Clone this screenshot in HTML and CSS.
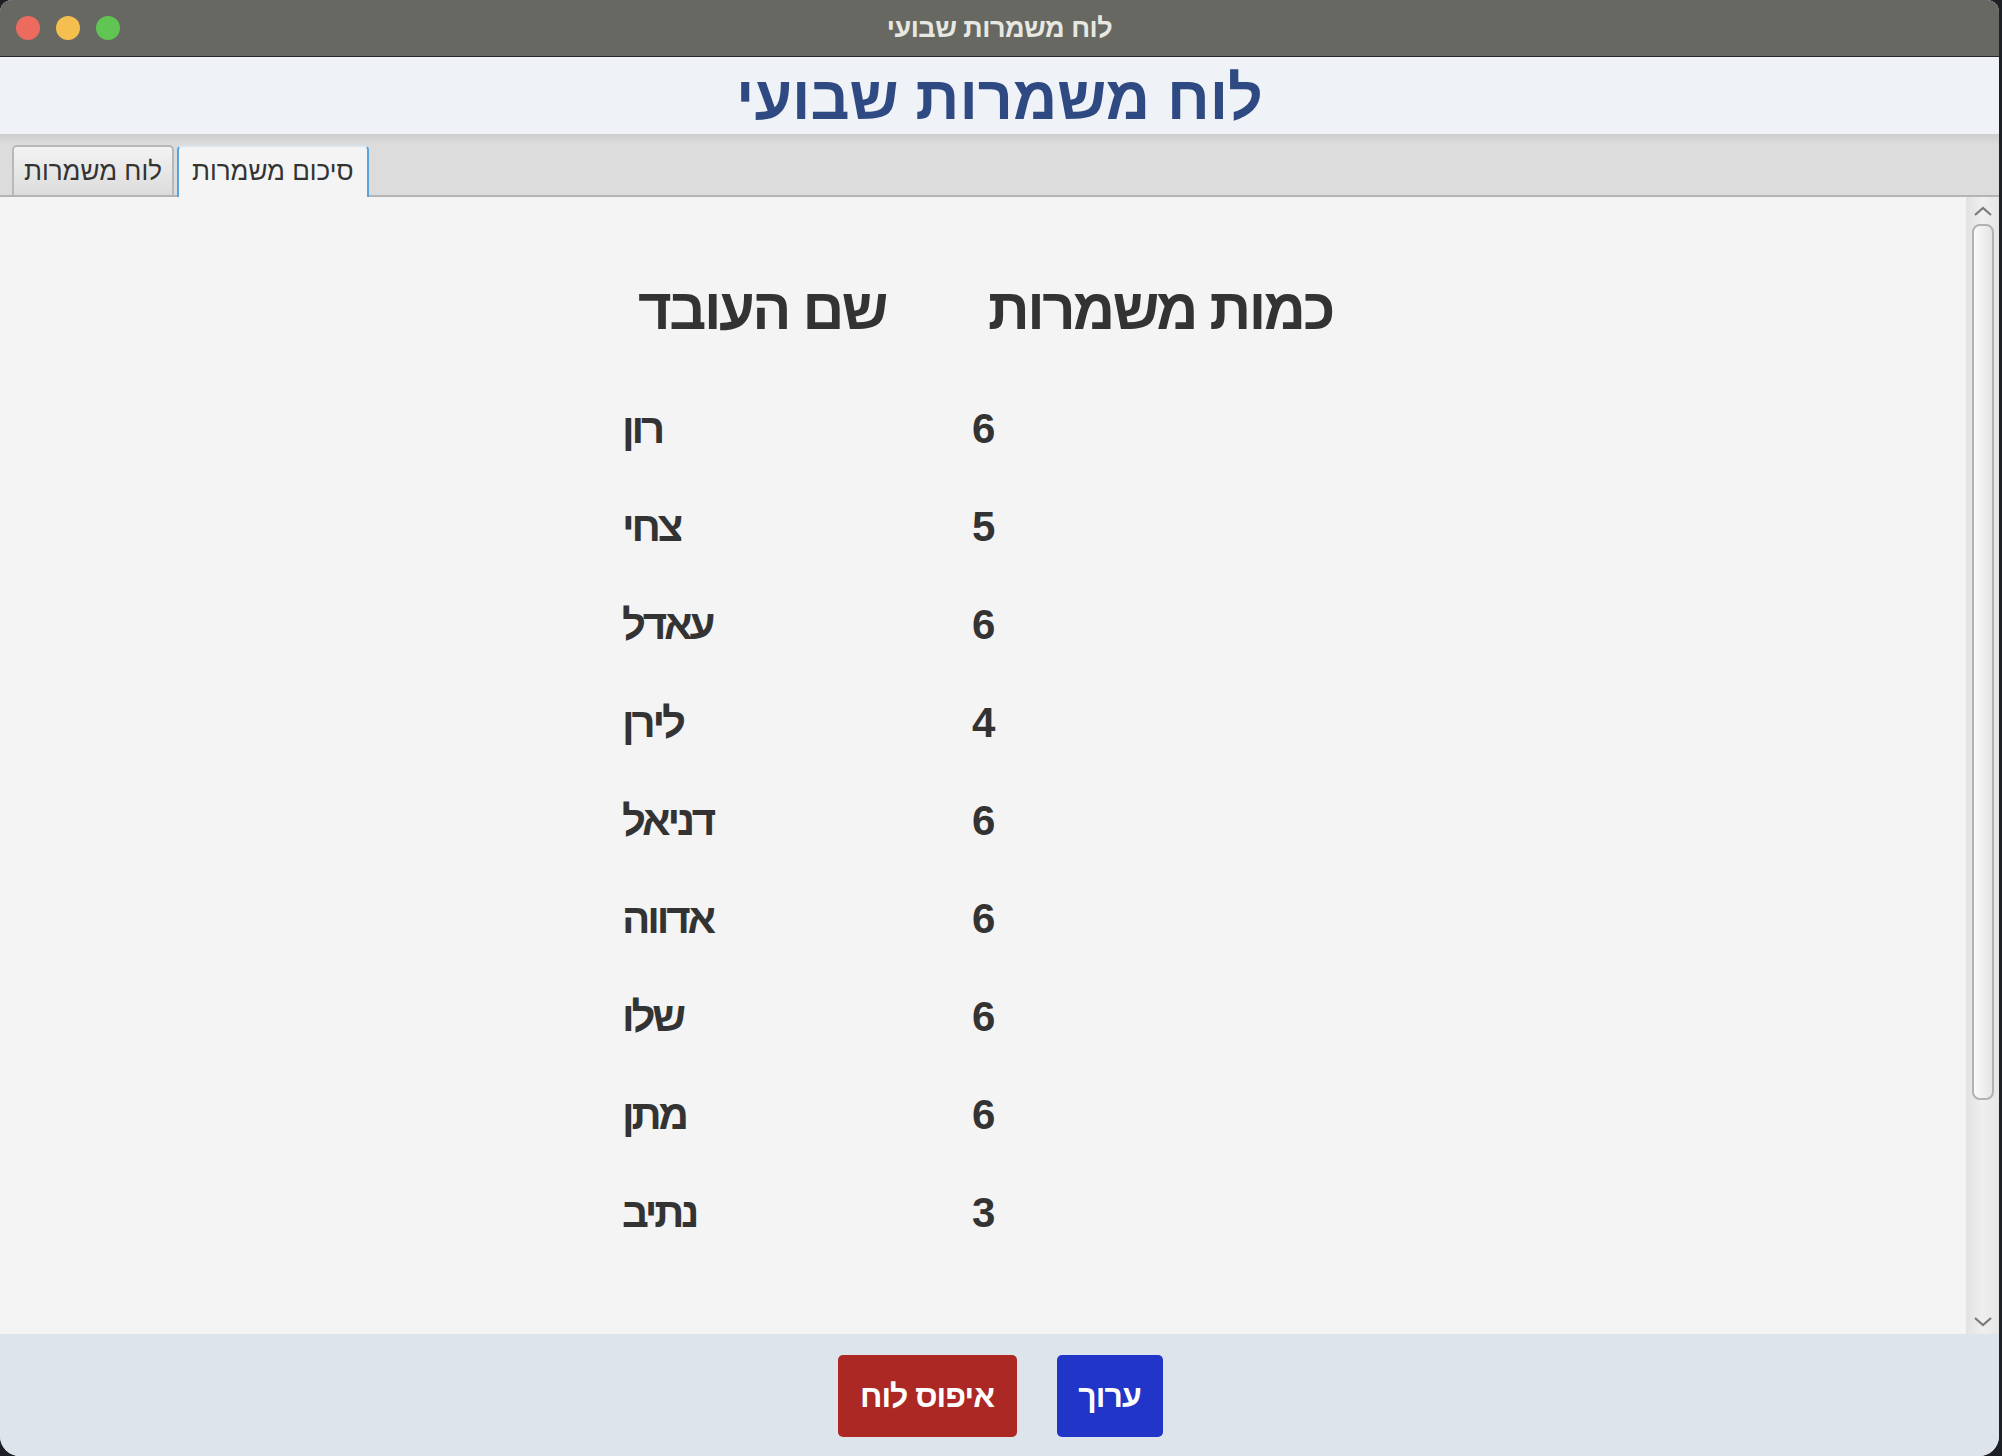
FILE: index.html
```html
<!DOCTYPE html>
<html lang="he">
<head>
<meta charset="utf-8">
<title>לוח משמרות שבועי</title>
<link rel="stylesheet" href="styles.css">
</head>
<body>
<div class="window">
  <div class="titlebar">
    <div class="lights">
      <span class="light red"></span>
      <span class="light yellow"></span>
      <span class="light green"></span>
    </div>
    <div class="wintitle">לוח משמרות שבועי</div>
  </div>
  <header class="header">
    <h1 class="heading">לוח משמרות שבועי</h1>
  </header>
  <nav class="tabbar">
    <div class="tab">לוח משמרות</div>
    <div class="tab tab-active">סיכום משמרות</div>
  </nav>
  <main class="content">
    <div class="scrollarea">
      <div class="table">
        <div class="th">שם העובד</div>
        <div class="th">כמות משמרות</div>
        <div class="td">רון</div><div class="td num">6</div>
        <div class="td">צחי</div><div class="td num">5</div>
        <div class="td">עאדל</div><div class="td num">6</div>
        <div class="td">לירן</div><div class="td num">4</div>
        <div class="td">דניאל</div><div class="td num">6</div>
        <div class="td">אדווה</div><div class="td num">6</div>
        <div class="td">שלו</div><div class="td num">6</div>
        <div class="td">מתן</div><div class="td num">6</div>
        <div class="td">נתיב</div><div class="td num">3</div>
      </div>
    </div>
    <div class="scrollbar">
      <svg class="arrow arrow-up" width="20" height="12" viewBox="0 0 20 12"><path d="M2 10 L10 3 L18 10" fill="none" stroke="#7a7a7a" stroke-width="2.2"/></svg>
      <div class="thumb"></div>
      <div class="track-rest"></div>
      <svg class="arrow arrow-down" width="20" height="12" viewBox="0 0 20 12"><path d="M2 2 L10 9 L18 2" fill="none" stroke="#7a7a7a" stroke-width="2.2"/></svg>
    </div>
  </main>
  <footer class="footer">
    <button class="btn btn-red">איפוס לוח</button>
    <button class="btn btn-blue">ערוך</button>
  </footer>
</div>
</body>
</html>
```
FILE: styles.css
```css
html, body {
  margin: 0;
  padding: 0;
}
body {
  background: #1d2024;
  width: 2002px;
  height: 1456px;
  overflow: hidden;
  font-family: "Liberation Sans", Arial, sans-serif;
}
.window {
  width: 1999px;
  height: 1456px;
  border-radius: 12px 12px 20px 20px;
  overflow: hidden;
  display: flex;
  flex-direction: column;
  background: #f4f4f4;
}
.titlebar {
  height: 56px;
  flex: none;
  background: #676862;
  border-bottom: 1px solid #262626;
  display: flex;
  align-items: center;
  position: relative;
}
.lights {
  display: flex;
  gap: 16px;
  padding-left: 16px;
}
.light {
  width: 24px;
  height: 24px;
  border-radius: 50%;
  display: block;
}
.red { background: #ed6a5e; }
.yellow { background: #f5bf4f; }
.green { background: #61c554; }
.wintitle {
  position: absolute;
  left: 0;
  right: 0;
  text-align: center;
  color: #e8e8e2;
  font-weight: bold;
  font-size: 27px;
  letter-spacing: -0.5px;
}
.header {
  height: 77px;
  flex: none;
  background: #eff2f6;
  display: flex;
  align-items: center;
  justify-content: center;
}
.heading {
  margin: 0;
  padding-top: 6px;
  font-size: 61px;
  font-weight: bold;
  color: #2f4a82;
  line-height: 1;
}
.tabbar {
  height: 61px;
  flex: none;
  background: linear-gradient(to bottom, #cdcdcd 0px, #dcdcdc 10px, #dcdcdc 100%);
  border-bottom: 2px solid #b4b4b4;
  display: flex;
  align-items: flex-end;
  gap: 3px;
  padding-left: 12px;
}
.tab {
  height: 50px;
  padding: 0 10px;
  box-sizing: border-box;
  display: flex;
  align-items: center;
  font-size: 26px;
  color: #333;
  white-space: nowrap;
  background: linear-gradient(to bottom, #f3f3f3, #dcdcdc);
  border: 2px solid #b8b8b8;
  border-bottom: none;
  border-radius: 5px 5px 0 0;
}
.tab-active {
  height: 52px;
  padding: 0 13px 2px;
  margin-bottom: -2px;
  background: #f4f4f4;
  border: 2px solid #d8e4ee;
  border-left-color: #5aa2dc;
  border-right-color: #5aa2dc;
  border-bottom: none;
  position: relative;
  z-index: 1;
}
.content {
  height: 1137px;
  flex: none;
  display: flex;
  background: #f4f4f4;
}
.scrollarea {
  flex: 1;
  padding-top: 62px;
}
.table {
  display: grid;
  grid-template-columns: 350px 372px;
  grid-template-rows: 121px;
  grid-auto-rows: 98px;
  justify-content: center;
}
.th, .td {
  display: flex;
  align-items: center;
  font-weight: bold;
  color: #333;
  white-space: nowrap;
}
.th {
  height: 98px;
  align-self: start;
  font-size: 58px;
  letter-spacing: -2.5px;
  padding-left: 16px;
}
.td {
  font-size: 42px;
  letter-spacing: -3.2px;
  padding-left: 0;
}
.td.num {
  letter-spacing: 0;
}
.scrollbar {
  width: 33px;
  flex: none;
  background: linear-gradient(to right, #e2e2e2, #efefef 50%, #e6e6e6);
  display: flex;
  flex-direction: column;
  align-items: center;
}
.arrow {
  flex: none;
}
.arrow-up {
  margin-top: 8px;
  margin-bottom: 7px;
}
.arrow-down {
  margin-bottom: 6px;
}
.thumb {
  width: 22px;
  height: 876px;
  box-sizing: border-box;
  border: 2px solid #b2b2b2;
  border-radius: 8px;
  background: linear-gradient(to right, #fbfbfb, #e4e4e4);
  flex: none;
}
.track-rest {
  flex: 1;
}
.footer {
  flex: 1;
  background: #dde4ec;
  display: flex;
  justify-content: center;
  align-items: flex-start;
  gap: 40px;
  padding-top: 21px;
  padding-left: 1px;
}
.btn {
  height: 82px;
  border: none;
  border-radius: 5px;
  color: #fff;
  font-family: "Liberation Sans", Arial, sans-serif;
  font-weight: bold;
  font-size: 32px;
  letter-spacing: -1px;
  padding: 0;
  white-space: nowrap;
}
.btn-red {
  background: #ab2824;
  width: 179px;
}
.btn-blue {
  background: #2135c8;
  width: 106px;
}
```
